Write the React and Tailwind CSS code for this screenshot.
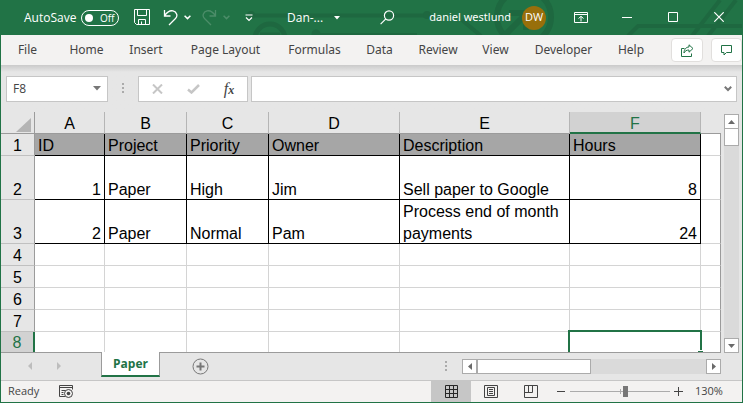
import React from "react";

const tabs = [
  { name: "File", width: "w-[53px]" },
  { name: "Home", width: "w-[65px]" },
  { name: "Insert", width: "w-[54px]" },
  { name: "Page Layout", width: "w-[105px]" },
  { name: "Formulas", width: "w-[73px]" },
  { name: "Data", width: "w-[57px]" },
  { name: "Review", width: "w-[60px]" },
  { name: "View", width: "w-[55px]" },
  { name: "Developer", width: "w-[81px]" },
  { name: "Help", width: "w-[54px]" },
];

const columns = [
  { name: "A", width: "w-[70px]" },
  { name: "B", width: "w-[82px]" },
  { name: "C", width: "w-[82px]" },
  { name: "D", width: "w-[131px]" },
  { name: "E", width: "w-[170px]" },
  { name: "F", width: "w-[131px]" },
];

const headings = ["ID", "Project", "Priority", "Owner", "Description", "Hours"];

const tasks = [
  ["1", "Paper", "High", "Jim", "Sell paper to Google", "8"],
  ["2", "Paper", "Normal", "Pam", "Process end of month payments", "24"],
];

const emptyRows = [4, 5, 6, 7];

function Chevron({ className }) {
  return (
    <svg className={className} width="7" height="5" viewBox="0 0 7 5" fill="none" stroke="currentColor" strokeWidth="1.5">
      <path d="M.6.8 3.5 3.6 6.4.8" />
    </svg>
  );
}

function CircuitPattern() {
  return (
    <svg className="pointer-events-none absolute top-0 right-0" width="743" height="35" viewBox="0 0 743 35" fill="none" stroke="#1e6840" strokeWidth="4">
      <path d="M252 15.500H428" />
      <circle cx="252" cy="15" r="4" fill="#1e6840" stroke="none" />
      <circle cx="428" cy="15" r="4" fill="#1e6840" stroke="none" />
      <circle cx="271" cy="39" r="15" strokeWidth="5" />
      <path d="M261 35H281" strokeWidth="5" />
      <circle cx="317" cy="34" r="4.500" fill="#1e6840" stroke="none" />
      <path d="M317 35H418" />
      <path d="M463 20 482 36" />
      <circle cx="525" cy="17" r="27" strokeWidth="6" />
      <path d="M505 36 524 17M510 13H527V30" strokeWidth="6" />
      <path d="M629 36 639 26H743M693 36 721 0M709 36 737 0" />
    </svg>
  );
}

function TitleBar() {
  return (
    <header className="relative flex h-[35px] items-center overflow-hidden bg-[#217346] text-[12px] text-white">
      <CircuitPattern />
      <div className="relative flex flex-1 items-center pl-[23px]">
        <label htmlFor="autosave" className="w-[57px] whitespace-nowrap">AutoSave</label>
        <span className="relative flex h-4 w-[38px] items-center rounded-full border border-white pl-[18px] text-[10px] leading-none">
          <input id="autosave" type="checkbox" className="absolute left-[3px] size-2 appearance-none rounded-full bg-white checked:left-[25px]" />
          Off
        </span>
        <button aria-label="Save" className="ml-[15px]">
          <svg width="16" height="17" viewBox="0 0 16 17" fill="none" stroke="currentColor">
            <path d="M.5.5h15v15h-13l-2-2zM3.500.5v6h9v-6M4.500 15.500v-5h7v5M7.500 12.500v3" />
          </svg>
        </button>
        <button aria-label="Undo" className="ml-[13px]">
          <svg width="15" height="17" viewBox="0 0 15 17" fill="none" stroke="currentColor" strokeWidth="1.300">
            <path d="M1.500 1v6h6M1.500 7C4 3 7 1.300 10 1.900 14 2.800 15 7.300 12.500 9.500L6 16" />
          </svg>
        </button>
        <button aria-label="Undo history" className="ml-[6px]"><Chevron /></button>
        <button aria-label="Redo" className="ml-[11px] text-[#4c8d69]">
          <svg width="15" height="17" viewBox="0 0 15 17" fill="none" stroke="currentColor" strokeWidth="1.300">
            <path d="M13.500 1v6h-6M13.500 7C11 3 8 1.300 5 1.900 1 2.800 0 7.300 2.500 9.500L9 16" />
          </svg>
        </button>
        <button aria-label="Redo history" className="ml-[6px] text-[#4c8d69]"><Chevron /></button>
        <button aria-label="Customize Quick Access Toolbar" className="ml-[15px]">
          <svg width="8" height="8" viewBox="0 0 8 8" fill="none" stroke="currentColor" strokeWidth="1.200">
            <path d="M.5 1h7M1 3.500l3 3 3-3" />
          </svg>
        </button>
        <button className="ml-[34px] flex items-center gap-[11px]">
          Dan-...
          <svg width="6" height="4" viewBox="0 0 6 4" fill="currentColor"><path d="M0 0h6L3 3.500z" /></svg>
        </button>
        <button aria-label="Search" className="ml-auto">
          <svg width="15" height="15" viewBox="0 0 15 15" fill="none" stroke="currentColor" strokeWidth="1.200">
            <circle cx="9" cy="5.500" r="4.600" />
            <path d="M5.800 8.800.6 14.200" />
          </svg>
        </button>
      </div>
      <button className="relative ml-[34px] flex items-center gap-[11px]">
        <span className="font-['Noto_Sans',sans-serif] text-[11px]">daniel westlund</span>
        <span className="flex size-6 items-center justify-center rounded-full bg-[#986f0b] text-[11px]">DW</span>
      </button>
      <div className="relative flex pl-3">
        <button aria-label="Ribbon display options" className="flex w-[46px] justify-center">
          <svg width="14" height="12" viewBox="0 0 14 12" fill="none" stroke="currentColor">
            <path d="M.5.5h13v10H.5zM.5 2.500h13M7 9.500V4.500M4.500 6.500 7 4.300l2.500 2.200" />
          </svg>
        </button>
        <button aria-label="Minimize" className="flex w-[46px] justify-center">
          <svg width="10" height="11" viewBox="0 0 10 11" stroke="currentColor"><path d="M0 5.500h10" /></svg>
        </button>
        <button aria-label="Maximize" className="flex w-[46px] justify-center">
          <svg width="10" height="10" viewBox="0 0 10 10" fill="none" stroke="currentColor"><path d="M.5.5h9v9h-9z" /></svg>
        </button>
        <button aria-label="Close" className="flex w-[46px] justify-center">
          <svg width="10" height="10" viewBox="0 0 10 10" stroke="currentColor" strokeWidth="1.200"><path d="m.3.300 9.400 9.400M9.700.3.300 9.700" /></svg>
        </button>
      </div>
    </header>
  );
}

function RibbonTabs() {
  return (
    <nav className="flex h-[30px] items-center bg-[#f3f2f1] font-['Noto_Sans',sans-serif] text-[12px] text-[#444444]">
      {tabs.map((tab) => (
        <button key={tab.name} className={`${tab.width} shrink-0 text-center whitespace-nowrap`}>{tab.name}</button>
      ))}
      <div className="ml-auto flex gap-2 text-[#217346]">
        <button aria-label="Share" className="flex h-6 w-8 items-center justify-center rounded-sm border border-[#e1dfdd] bg-white">
          <svg width="13" height="13" viewBox="0 0 13 13" fill="none" stroke="currentColor">
            <path d="M3.500 4.500h-3v8h10v-3M8 .8l4 3.700-4 3.700V6C5.500 6 4 7 3 9c0-3.500 2-6 5-6z" />
          </svg>
        </button>
        <button aria-label="Comments" className="flex h-6 w-[31px] items-center justify-center rounded-sm border border-[#e1dfdd] bg-white">
          <svg width="12" height="11" viewBox="0 0 12 11" fill="none" stroke="currentColor">
            <path d="M.5.5h10v7h-5l-2.500 2.500V7.500H.5z" />
          </svg>
        </button>
      </div>
    </nav>
  );
}

function FormulaBar() {
  return (
    <div className="flex h-[47px] bg-linear-to-b from-[#cacaca] to-[#e6e6e6] to-15% px-[5px] pt-[11px]">
      <div className="relative flex h-[26px] w-[102px] border border-[#c6c6c6] bg-white">
        <input aria-label="Name box" defaultValue="F8" className="w-full pl-[6px] text-[12px] text-[#444444] outline-none" />
        <svg className="absolute top-[9px] right-[6px]" width="8" height="5" viewBox="0 0 8 5" fill="#777777"><path d="M0 0h8L4 4.500z" /></svg>
      </div>
      <svg className="mt-[7px] ml-[14px]" width="2" height="11" viewBox="0 0 2 11" fill="#ababab">
        <path d="M0 0h2v2H0zM0 4h2v2H0zM0 8h2v2H0z" />
      </svg>
      <div className="ml-[14px] flex h-[26px] w-[110px] items-center border border-[#c6c6c6] bg-white">
        <button aria-label="Cancel" className="flex w-9 justify-center">
          <svg width="11" height="10" viewBox="0 0 11 10" stroke="#c6c6c6" strokeWidth="2"><path d="m1 .5 9 9M10 .5l-9 9" /></svg>
        </button>
        <button aria-label="Enter" className="flex w-9 justify-center">
          <svg width="13" height="10" viewBox="0 0 13 10" fill="none" stroke="#c6c6c6" strokeWidth="2.500"><path d="m1 5.500 3.500 3L12 1" /></svg>
        </button>
        <button aria-label="Insert function" className="w-9 text-center font-['Liberation_Serif',serif] text-[16px] leading-none text-[#444444] italic">
          f<span className="text-[12px] font-bold">x</span>
        </button>
      </div>
      <div className="relative ml-[3px] flex h-[26px] flex-1 border border-[#c6c6c6] bg-white">
        <input aria-label="Formula" className="w-full px-2 text-[12px] outline-none" />
        <button aria-label="Expand formula bar" className="absolute top-[9px] right-[4px] text-[#777777]">
          <svg width="8" height="6" viewBox="0 0 8 6" fill="none" stroke="currentColor" strokeWidth="2"><path d="m.8.8 3.200 3.200L7.200.8" /></svg>
        </button>
      </div>
    </div>
  );
}

function RowHeader({ children }) {
  return (
    <th scope="row" className="border-r border-b border-r-[#9b9b9b] border-b-[#c0c0c0] bg-[#e6e6e6] p-0 text-center align-bottom font-normal">
      <div className="-mb-[2px]">{children}</div>
    </th>
  );
}

function Sheet() {
  return (
    <table className="w-full table-fixed border-separate border-spacing-0 border-b border-[#9b9b9b] bg-white font-['Liberation_Sans',Arial,sans-serif] text-[16px] leading-[22px] text-black">
      <thead>
        <tr className="h-[22px]">
          <th className="w-[34px] border-r border-b border-[#9b9b9b] bg-[#e6e6e6] p-0">
            <svg className="mt-1 mr-[3px] ml-auto" width="15" height="14" viewBox="0 0 15 14" fill="#b4b4b4"><path d="M15 0v14H0z" /></svg>
          </th>
          {columns.map((column) => (
            <th
              key={column.name}
              scope="col"
              className={`${column.width} border-r p-0 align-bottom font-normal ${column.name === "F" ? "border-b-2 border-r-[#b5b5b5] border-b-[#217346] bg-[#d2d2d2] text-[#217346]" : "border-b border-r-[#b5b5b5] border-b-[#9b9b9b] bg-[#e6e6e6]"}`}
            >
              <div className={column.name === "F" ? "-mb-[3px]" : "-mb-[2px]"}>{column.name}</div>
            </th>
          ))}
          <td className="border-b border-[#9b9b9b] bg-[#e6e6e6] p-0" />
        </tr>
      </thead>
      <tbody>
        <tr className="h-[22px]">
          <RowHeader>1</RowHeader>
          {headings.map((heading) => (
            <td key={heading} className="border-r border-b border-black bg-[#a6a6a6] px-[3px] py-0 align-bottom">
              <div className="-mb-[2px]">{heading}</div>
            </td>
          ))}
          <td className="border-r border-b border-r-[#9b9b9b] border-b-[#d4d4d4]" />
        </tr>
        {tasks.map((task, row) => (
          <tr key={task[0]} className="h-[44px]">
            <RowHeader>{row + 2}</RowHeader>
            {task.map((value, index) => (
              <td key={headings[index]} className={`border-r border-b border-black px-[3px] py-0 align-bottom ${index === 0 || index === 5 ? "text-right" : ""}`}>
                <div className="-mb-[2px]">{value}</div>
              </td>
            ))}
            <td className="border-r border-b border-r-[#9b9b9b] border-b-[#d4d4d4]" />
          </tr>
        ))}
        {emptyRows.map((row) => (
          <tr key={row} className="h-[22px]">
            <RowHeader>{row}</RowHeader>
            {columns.map((column) => (
              <td key={column.name} className="border-r border-b border-[#d4d4d4] p-0" />
            ))}
            <td className="border-r border-b border-r-[#9b9b9b] border-b-[#d4d4d4]" />
          </tr>
        ))}
        <tr className="h-5">
          <th scope="row" className="border-r-2 border-[#217346] bg-[#d2d2d2] p-0 text-center align-bottom font-normal text-[#217346]">
            <div className="-mb-[2px]">8</div>
          </th>
          {columns.slice(0, 5).map((column) => (
            <td key={column.name} className="border-r border-[#d4d4d4] p-0" />
          ))}
          <td className="relative p-0">
            <div className="absolute -top-[2px] -right-px bottom-0 -left-[2px] border-2 border-b-0 border-[#217346]" />
            <div className="absolute -right-[2px] bottom-0 h-[2px] w-[5px] border-t border-b border-t-white border-b-[#217346]" />
          </td>
          <td className="border-r border-[#9b9b9b] p-0" />
        </tr>
      </tbody>
    </table>
  );
}

function VerticalScroll() {
  return (
    <div className="flex w-[21px] shrink-0 bg-[#e6e6e6] pt-[2px] pl-[3px]">
      <div className="flex w-[15px] flex-col bg-[#dadada]">
        <button aria-label="Scroll up" className="flex h-[15px] items-center justify-center border border-[#ababab] bg-white">
          <svg width="7" height="4" viewBox="0 0 7 4" fill="#6a6a6a"><path d="M0 4h7L3.500 0z" /></svg>
        </button>
        <div className="h-[17px] border border-t-0 border-[#ababab] bg-white" />
        <button aria-label="Scroll down" className="mt-auto flex h-[15px] items-center justify-center border border-[#ababab] bg-white">
          <svg width="7" height="4" viewBox="0 0 7 4" fill="#6a6a6a"><path d="M0 0h7L3.500 4z" /></svg>
        </button>
      </div>
    </div>
  );
}

function SheetTabs() {
  return (
    <div className="flex h-[27px] bg-[#e6e6e6]">
      <div className="flex w-[100px] items-start gap-[25px] pt-[9px] pl-[27px]">
        <button aria-label="Previous sheet"><svg width="4" height="8" viewBox="0 0 4 8" fill="#bdbdbd"><path d="M4 0v8L0 4z" /></svg></button>
        <button aria-label="Next sheet"><svg width="4" height="8" viewBox="0 0 4 8" fill="#bdbdbd"><path d="M0 0v8l4-4z" /></svg></button>
      </div>
      <button className="-mt-px h-[25px] w-[59px] border-x border-b-2 border-x-[#9b9b9b] border-b-[#217346] bg-white text-[12px] leading-[23px] font-bold text-[#217346]">Paper</button>
      <button aria-label="New sheet" className="mt-[5px] ml-8 h-4">
        <svg width="17" height="17" viewBox="0 0 17 17" fill="none" stroke="#777777"><circle cx="8.500" cy="8.500" r="7.500" /><path d="M4.500 8.500h8M8.500 4.500v8" strokeWidth="2" /></svg>
      </button>
      <div className="ml-auto flex items-start">
        <svg className="mt-2" width="2" height="11" viewBox="0 0 2 11" fill="#ababab"><path d="M0 0h2v2H0zM0 4h2v2H0zM0 8h2v2H0z" /></svg>
        <div className="mt-[6px] mr-[21px] ml-[15px] flex h-[15px] w-[259px] bg-[#dadada]">
          <button aria-label="Scroll left" className="flex w-[15px] items-center justify-center border border-[#ababab] bg-white">
            <svg width="4" height="7" viewBox="0 0 4 7" fill="#6a6a6a"><path d="M4 0v7L0 3.500z" /></svg>
          </button>
          <div className="w-[114px] border border-[#ababab] bg-white" />
          <button aria-label="Scroll right" className="ml-auto flex w-[15px] items-center justify-center border border-[#ababab] bg-white">
            <svg width="4" height="7" viewBox="0 0 4 7" fill="#6a6a6a"><path d="M0 0v7l4-3.500z" /></svg>
          </button>
        </div>
      </div>
    </div>
  );
}

function StatusBar() {
  return (
    <footer className="flex h-[22px] items-center border-t border-[#c6c6c6] bg-[#f3f2f1] text-[11px] text-[#444444]">
      <span className="w-[50px] pl-[7px]">Ready</span>
      <button aria-label="Record macro" className="ml-2">
        <svg width="15" height="14" viewBox="0 0 15 14" fill="none" stroke="currentColor">
          <path d="M6 11.500H.5V.5h13v4M.5 2.500h13M2.500 5.500h4M2.500 7.500h2M2.500 9.500h2" />
          <circle cx="9.500" cy="8.500" r="4" fill="#f3f2f1" /><circle cx="9.500" cy="8.500" r="1.800" fill="currentColor" stroke="none" />
        </svg>
      </button>
      <div className="ml-auto flex h-full items-center">
        <button aria-label="Normal view" className="flex h-full w-10 items-center justify-center bg-[#c6c6c6] text-[#262626]">
          <svg width="13" height="13" viewBox="0 0 13 13" fill="none" stroke="currentColor"><path d="M.5.5h12v12H.5zM4.500 0v13M8.500 0v13M0 4.500h13M0 8.500h13" /></svg>
        </button>
        <button aria-label="Page layout view" className="flex w-10 justify-center">
          <svg width="14" height="13" viewBox="0 0 14 13" fill="none" stroke="currentColor"><path d="M.5.5h13v12H.5zM3.500 2.500h7v8h-7zM5 4.500h4M5 6.500h4M5 8.500h4" /></svg>
        </button>
        <button aria-label="Page break preview" className="flex w-10 justify-center">
          <svg width="14" height="13" viewBox="0 0 14 13" fill="none" stroke="currentColor"><path d="M.5.5h13v12H.5zM4.500.5v7M8.500.5v7M.5 7.500h8" /></svg>
        </button>
        <button aria-label="Zoom out" className="ml-[6px]"><svg width="8" height="9" viewBox="0 0 8 9" stroke="currentColor"><path d="M0 4.500h8" /></svg></button>
        <div className="relative ml-[5px] flex h-[11px] w-[100px] items-center">
          <div className="h-px w-full bg-[#ababab]" />
          <div className="absolute left-1/2 h-[5px] w-px bg-[#ababab]" />
          <input aria-label="Zoom" type="range" min="10" max="400" defaultValue="228" className="absolute inset-0 w-full appearance-none bg-transparent [&::-webkit-slider-thumb]:h-[11px] [&::-webkit-slider-thumb]:w-[5px] [&::-webkit-slider-thumb]:appearance-none [&::-webkit-slider-thumb]:bg-[#777777]" />
        </div>
        <button aria-label="Zoom in" className="ml-1"><svg width="9" height="9" viewBox="0 0 9 9" stroke="currentColor"><path d="M0 4.500h9M4.500 0v9" /></svg></button>
        <span className="w-[59px] pl-3">130%</span>
      </div>
    </footer>
  );
}

export default function App() {
  return (
    <div className="w-full border-x border-b border-[#217346] bg-[#e6e6e6] font-['Open_Sans','Noto_Sans',sans-serif]">
      <TitleBar />
      <RibbonTabs />
      <FormulaBar />
      <main className="flex">
        <div className="min-w-0 flex-1"><Sheet /></div>
        <VerticalScroll />
      </main>
      <SheetTabs />
      <StatusBar />
    </div>
  );
}
